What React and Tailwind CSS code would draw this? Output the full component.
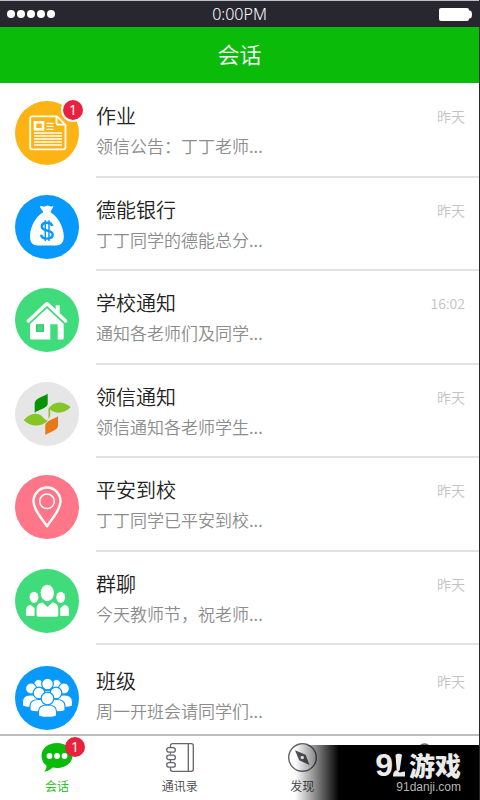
import { clsx } from 'clsx';

function HomeworkIcon() {
  return (
    <g fill="none" stroke="#fff" strokeWidth="1.8" strokeLinejoin="round">
      <path d="M42 15.3H17.2a2 2 0 0 0-2 2v29a2 2 0 0 0 2 2h31.3a2 2 0 0 0 2-2V24Z" />
      <path d="M41.5 15.3v6.4a2 2 0 0 0 2 2h7" />
      <rect x="20" y="21.3" width="8" height="7" strokeWidth="2.6" strokeLinejoin="miter" />
      <path d="M31.5 22.3h7M31.5 25.3h7M31.5 28.3h7M19 32h28M19 35h28M19 38h28M19 41h28M19 44h28" strokeWidth="1.3" />
    </g>
  );
}

function BankIcon() {
  return (
    <g>
      <path
        fill="#fff"
        d="M25 11.2c2-.6 3 .9 4.5.5s2.5-1.6 4-.9 2.7.9 4.8.1c-.2 2.6-2.3 4-2.9 6.4 7 3.5 13.4 14.6 13.4 24.3 0 5.500-2.300 9-7.500 9H22.500c-5.200 0-7.500-3.500-7.500-9 0-9.700 6-20.800 13.300-24.300-.5-2.400-3.100-3.500-3.300-6.100Z"
      />
      <g fill="none" stroke="#0899fd" strokeWidth="2.4">
        <path d="M37.3 31.1c-.5-2.200-2.400-3.400-5.300-3.400-3.200 0-5.200 1.500-5.200 3.900 0 5.600 10.900 2.600 10.900 8 0 2.500-2.200 4-5.600 4-3.300 0-5.600-1.300-6-3.900" />
        <path d="M30.3 25.200v20.800M34 25.200v20.800" strokeWidth="1.5" />
      </g>
    </g>
  );
}

function SchoolIcon() {
  return (
    <g>
      <path d="M40.7 22v-4.7h4v9Z" fill="#fff" />
      <path d="m13.3 33 18.7-17.5L50.7 33" fill="none" stroke="#fff" strokeWidth="3.4" strokeLinecap="round" strokeLinejoin="round" />
      <path d="M32 20.3 48.7 36v14.3a1.3 1.3 0 0 1-1.3 1.3h-4.7V36.3h-7.4v15.3h-19a1.3 1.3 0 0 1-1.3-1.3V36Z" fill="#fff" />
      <rect x="21.5" y="36.8" width="7" height="6.5" fill="#40dc7b" stroke="#2fc169" />
    </g>
  );
}

function LeavesIcon() {
  return (
    <g>
      <path d="M32.7 11.7c-4 2.8-12 4-13 9.3v9.7c4-3 11.5-4 13-8.4Z" fill="#049404" />
      <path d="M43 34.3c-4 2.8-11.7 4-12.7 9v9.9c4-3 11.2-4.2 12.7-8.6Z" fill="#e67817" />
      <path d="M33.5 26.500c5-7.500 14.500-8 22.200-1.500-5.700 6.500-15.200 7.500-20.500 2.500v4.500c0 2-.5 3.500-1.700 5Z" fill="#86c526" />
      <path d="M8.7 38.3c5.3-7.300 14.300-8.500 19-3.300 1.800 2 3 3.300 5.300 3.500-6 6.500-17 7-24.300-.2Z" fill="#86c526" />
    </g>
  );
}

function PinIcon() {
  return (
    <g fill="none" stroke="#fff">
      <path d="M32 51.3C27.5 44 18.5 35.500 18.5 26.300a13.500 13.800 0 0 1 27 0C45.500 35.500 36.500 44 32 51.300Z" strokeWidth="2.4" strokeLinejoin="round" />
      <circle cx="32" cy="26.3" r="7.3" strokeWidth="1.5" />
    </g>
  );
}

function GroupIcon() {
  return (
    <g fill="#fff">
      <ellipse cx="32.3" cy="24" rx="6.7" ry="8.2" />
      <ellipse cx="19" cy="28.3" rx="4.4" ry="5.6" />
      <ellipse cx="45.7" cy="28.3" rx="4.4" ry="5.6" />
      <path d="M27.3 33.3 32.5 38l5.2-4.7c3.6 1 5.6 3 5.6 6.5V46a1.7 1.7 0 0 1-1.7 1.7H23.3a1.7 1.7 0 0 1-1.7-1.7v-6.2c0-3.5 2.2-5.5 5.7-6.5Z" />
      <path d="M15.3 35.7 19.5 39v8h-7.3a1.2 1.2 0 0 1-1.2-1.2V41c0-2.8 1.5-4.6 4.3-5.3Z" />
      <path d="M49.5 35.7 45.3 39v8h7.5a1.2 1.2 0 0 0 1.2-1.2V41c0-2.8-1.7-4.6-4.5-5.3Z" />
    </g>
  );
}

// Back row first, so that each nearer figure covers the ones behind it.
const classmates = [
  [23.5, 18.5, 5, 7],
  [41.5, 18.5, 5, 7],
  [32.5, 18, 5.8, 8],
  [16, 22.5, 5.5, 8.5],
  [49, 22.5, 5.5, 8.5],
  [24, 27, 5.8, 9],
  [41, 27, 5.8, 9],
  [32.5, 32.5, 6.3, 9],
];

function ClassIcon() {
  return (
    <g fill="#fff" stroke="#0899fd" strokeWidth="1.2">
      {classmates.map(([x, y, r, w]) => (
        <g key={`${x}-${y}`}>
          <path d={`M${x - w} ${y + 17.5}v-4.5c0-4 3-6.5 ${w} -6.5s${w} 2.5 ${w} 6.5v4.5c-3 1.8-${2 * w - 3} 1.8-${2 * w} 0Z`} />
          <circle cx={x} cy={y} r={r} />
        </g>
      ))}
    </g>
  );
}

const conversations = [
  { title: '作业', preview: '领信公告：丁丁老师...', time: '昨天', color: 'bg-[#fdb314]', icon: HomeworkIcon, unread: 1 },
  { title: '德能银行', preview: '丁丁同学的德能总分...', time: '昨天', color: 'bg-[#0899fd]', icon: BankIcon },
  { title: '学校通知', preview: '通知各老师们及同学...', time: '16:02', color: 'bg-[#40dc7b]', icon: SchoolIcon },
  { title: '领信通知', preview: '领信通知各老师学生...', time: '昨天', color: 'bg-[#e6e6e6]', icon: LeavesIcon },
  { title: '平安到校', preview: '丁丁同学已平安到校...', time: '昨天', color: 'bg-[#ff7688]', icon: PinIcon },
  { title: '群聊', preview: '今天教师节，祝老师...', time: '昨天', color: 'bg-[#40dc7b]', icon: GroupIcon },
  { title: '班级', preview: '周一开班会请同学们...', time: '昨天', color: 'bg-[#0899fd]', icon: ClassIcon },
];

function Badge({ count, className }) {
  return (
    <span className={clsx('absolute flex size-5 items-center justify-center rounded-full bg-[#e8213f] font-["Open_Sans",sans-serif] text-sm font-normal text-white', className)}>
      {count}
    </span>
  );
}

function StatusBar() {
  return (
    <div className="grid h-[27px] grid-cols-3 items-center border-t border-[#b9c2c2] bg-[#28272f] px-[7px]">
      <div className="flex gap-[2px]">
        {[0, 1, 2, 3, 4].map((dot) => (
          <span key={dot} className="size-2 rounded-full bg-white" />
        ))}
      </div>
      <span className='text-center font-["Noto_Sans",sans-serif] text-base leading-6 font-light text-white'>0:00PM</span>
      <svg className="h-[13px] w-[33px] justify-self-end" viewBox="0 0 33 13" fill="#fff">
        <rect width="30" height="13" rx="2" />
        <path d="M29 2.5h1.500a2.500 4 0 0 1 0 8H29Z" />
      </svg>
    </div>
  );
}

function Conversation({ item }) {
  const Icon = item.icon;
  return (
    <li className="group flex h-[94px] gap-[17px] pl-[15px] even:h-[93px] last:h-[89px] last:pt-1">
      <div className="relative mt-[17px] size-16 shrink-0">
        <svg className={clsx('size-16 rounded-full', item.color)} viewBox="0 0 64 64">
          <Icon />
        </svg>
        {item.unread && <Badge count={item.unread} className="-top-px -right-1 ring-2 ring-white" />}
      </div>
      <div className="flex min-w-0 flex-1 justify-between border-b-2 border-[#e2e2e2] pt-[18px] pr-[14px] group-last:border-b-0">
        <div className="min-w-0">
          <h2 className="truncate text-xl leading-7 text-[#222]">{item.title}</h2>
          <p className="mt-[2px] truncate text-[17px] leading-7 text-[#8c8c8c]">{item.preview}</p>
        </div>
        <time className="mt-1 text-sm text-[#c3c3c3]">{item.time}</time>
      </div>
    </li>
  );
}

function Tab({ label, active, children }) {
  return (
    <button type="button" className={clsx('flex w-[50px] flex-col items-center gap-1 text-xs leading-5', active ? 'text-[#0abb09]' : 'text-[#444]')}>
      {children}
      {label}
    </button>
  );
}

function TabBar() {
  return (
    <nav className="flex h-[66px] justify-between border-t-2 border-[#bdbdbd] pt-[7px] pr-[29px] pl-8">
      <Tab label="会话" active>
        <span className="relative">
          <svg className="h-[29px] w-8" viewBox="0 0 32 29">
            <path d="M16 0c8.700 0 15.500 5.400 15.500 12.500S24.700 25 16 25c-1.500 0-3-.1-4.300-.4C9.500 27 6.500 28.500 3 28.500c1.600-1.600 2.700-3.500 2.500-5.900C2.200 20.300.5 16.800.5 12.500.5 5.400 7.300 0 16 0Z" fill="#0abb09" />
            <g fill="#fff">
              <circle cx="8.5" cy="13" r="2.9" />
              <circle cx="16" cy="13" r="2.9" />
              <circle cx="23.5" cy="13" r="2.9" />
            </g>
          </svg>
          <Badge count={1} className="-top-[6px] -right-3" />
        </span>
      </Tab>
      <Tab label="通讯录">
        <svg className="h-[29px] w-7" viewBox="0 0 28 29" fill="none" stroke="#65646e" strokeWidth="1.3">
          <path d="M4.5 4.500V2.700a2 2 0 0 1 2-2h18.800a2 2 0 0 1 2 2v23.600a2 2 0 0 1-2 2H6.500a2 2 0 0 1-2-2v-2M4.500 9.500v2M4.500 17v2M22.300.7v27.600" />
          <rect x=".7" y="4.7" width="8.6" height="4.4" rx="2.2" />
          <rect x=".7" y="12.2" width="8.6" height="4.4" rx="2.2" />
          <rect x=".7" y="19.7" width="8.6" height="4.4" rx="2.2" />
        </svg>
      </Tab>
      <Tab label="发现">
        <svg className="size-[29px]" viewBox="0 0 29 29">
          <circle cx="14.5" cy="14.5" r="13.8" fill="none" stroke="#65646e" strokeWidth="1.4" />
          <path fillRule="evenodd" d="m7 7.3 10.7 4.4 3.8 10.3-10.3-4.7Zm7.3 5.4a1.8 1.8 0 1 0 0 3.6 1.8 1.8 0 0 0 0-3.6Z" fill="#55545f" />
        </svg>
      </Tab>
      <Tab>
        <svg className="size-[29px]" viewBox="0 0 29 29" fill="none" stroke="#65646e" strokeWidth="1.4">
          <circle cx="14.5" cy="7" r="6" />
          <path d="M2.5 28v-4a8 8 0 0 1 8-8h8a8 8 0 0 1 8 8v4" />
        </svg>
      </Tab>
    </nav>
  );
}

function Watermark() {
  return (
    <div className="pointer-events-none absolute right-0 bottom-0 flex h-[55px] w-[184px] flex-col items-end bg-linear-to-r from-transparent to-black to-[44px] pt-1 pr-[18px] text-[#ebebeb]">
      <div className="flex items-center">
        <span className='font-["Liberation_Sans",sans-serif] text-[32px] leading-8 font-bold'>9</span>
        <svg className="mr-1 h-7 w-3" viewBox="0 0 12 28" fill="currentColor">
          <path d="M2.5 4C3.5 2.3 8 2.3 9 4L6.8 18.5c-.4 2-2.8 2-3.2 0Z" />
          <path d="M0 25.5c0-4 1.5-6.3 3.5-6.3 1.8 0 2 2.3 3.5 2.3 1.200 0 2.300-.8 5-1v5Z" />
        </svg>
        <span className="text-[26px] leading-8 font-black">游戏</span>
      </div>
      <span className='font-["Liberation_Sans",sans-serif] text-xs leading-3 font-normal text-[#b5b5b5]'>91danji.com</span>
    </div>
  );
}

export default function App() {
  return (
    <div className='relative flex min-h-screen flex-col border-r border-[#28272f] bg-white font-["Noto_Sans_CJK_SC",sans-serif] font-[350]'>
      <StatusBar />
      <header className="flex h-14 items-center justify-center bg-[#0abb09] pb-1">
        <h1 className="text-[22px] leading-8 text-white">会话</h1>
      </header>
      <main className="flex-1 pt-px">
        <ul>
          {conversations.map((item) => (
            <Conversation key={item.title} item={item} />
          ))}
        </ul>
      </main>
      <TabBar />
      <Watermark />
    </div>
  );
}
